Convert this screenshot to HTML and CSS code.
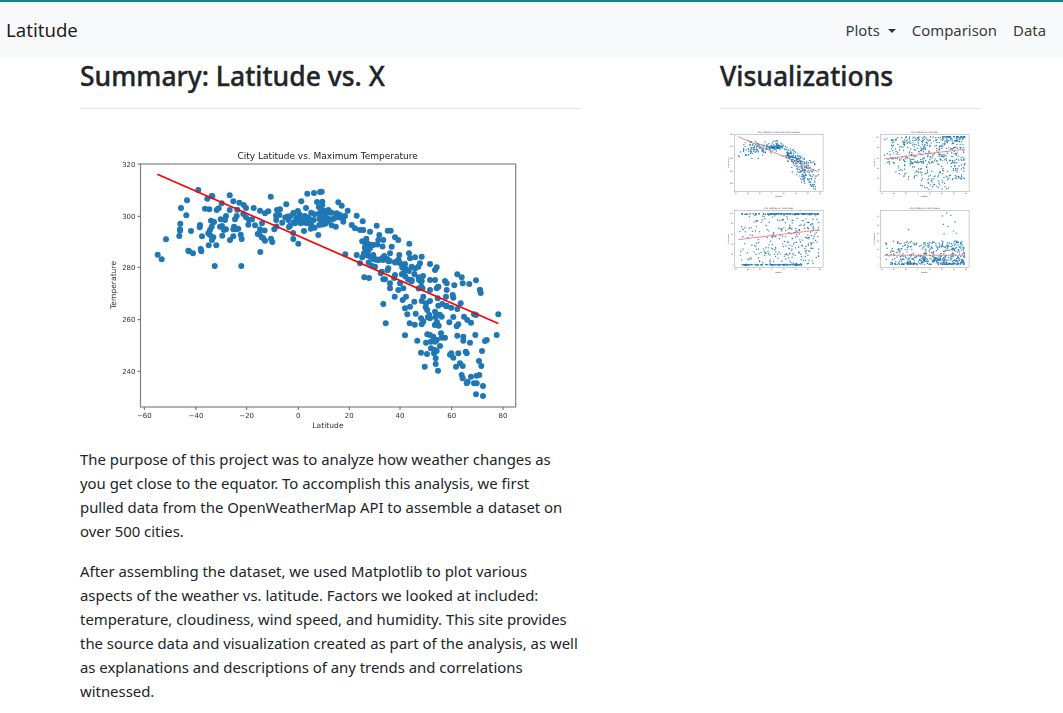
FILE: index.html
```html
<!DOCTYPE html>
<html lang="en">
<head>
<meta charset="utf-8">
<title>Latitude</title>
<link rel="stylesheet" href="styles.css">
</head>
<body>
<nav class="navbar">
  <a class="brand" href="#">Latitude</a>
  <ul class="nav-links">
    <li><a href="#">Plots<span class="caret"></span></a></li>
    <li><a href="#">Comparison</a></li>
    <li><a href="#">Data</a></li>
  </ul>
</nav>
<main class="layout">
  <section class="summary">
    <h1>Summary: Latitude vs. X</h1>
    <hr>
    <svg class="main-chart" id="chart-main" viewBox="80 125 500 307"></svg>
    <p class="intro">The purpose of this project was to analyze how weather changes as you get close to the equator. To accomplish this analysis, we first pulled data from the OpenWeatherMap API to assemble a dataset on over 500 cities.</p>
    <p>After assembling the dataset, we used Matplotlib to plot various aspects of the weather vs. latitude. Factors we looked at included: temperature, cloudiness, wind speed, and humidity. This site provides the source data and visualization created as part of the analysis, as well as explanations and descriptions of any trends and correlations witnessed.</p>
  </section>
  <aside class="visuals">
    <h1>Visualizations</h1>
    <hr>
    <div class="thumbs">
      <svg class="thumb" id="thumb-temp" viewBox="80 125 500 307"></svg>
      <svg class="thumb" id="thumb-hum" viewBox="80 125 500 307"></svg>
      <svg class="thumb" id="thumb-cloud" viewBox="80 125 500 307"></svg>
      <svg class="thumb" id="thumb-wind" viewBox="80 125 500 307"></svg>
    </div>
  </aside>
</main>
<script src="script.js"></script>
</body>
</html>
```
FILE: styles.css
```css
* { box-sizing: border-box; }
html, body { margin: 0; padding: 0; }
body {
  font-family: "Noto Sans", "Open Sans", sans-serif;
  font-size: 14.9px;
  line-height: 24px;
  color: #212529;
  background: #fff;
  overflow-x: hidden;
}
a { color: inherit; text-decoration: none; }
.navbar {
  display: flex;
  align-items: center;
  justify-content: space-between;
  height: 58px;
  padding: 0 17px 0 6px;
  background: #f8f9fa;
  border-top: 2px solid #17808f;
}
.brand { font-size: 18.6px; color: rgba(0, 0, 0, .9); }
.nav-links {
  display: flex;
  gap: 16px;
  margin: 0;
  padding: 0;
  list-style: none;
  color: rgba(0, 0, 0, .8);
}
.caret {
  display: inline-block;
  margin-left: 8px;
  vertical-align: 3px;
  border-top: 4.5px solid currentColor;
  border-left: 4.5px solid transparent;
  border-right: 4.5px solid transparent;
}
.layout {
  display: grid;
  grid-template-columns: 500px 260px;
  column-gap: 140px;
  padding: 0 80px;
}
h1 {
  margin: 0;
  font-size: 26.5px;
  font-weight: 500;
  -webkit-text-stroke: .35px #212529;
  line-height: 36px;
  color: #212529;
}
hr {
  margin: 14px 0 16px;
  border: 0;
  border-top: 1px solid #e3e4e5;
}
.main-chart {
  display: block;
  width: 500px;
  height: 307px;
  margin-bottom: 15px;
  filter: blur(.3px);
}
p { margin: 0 0 16px; }
.intro { max-width: 490px; }
.thumbs {
  display: grid;
  grid-template-columns: 146px 114px;
  row-gap: 3px;
}
.thumb {
  display: block;
  width: 118.3px;
  height: 72.7px;
  overflow: visible;
  filter: blur(.5px);
}
.axis-box { fill: #fff; stroke: #808080; stroke-width: 1.2; }
.tick { stroke: #666; stroke-width: 1; }
.fit { stroke: #f00; stroke-width: 1.7; fill: none; }
.dot { fill: #1f77b4; }
.tick-label, .axis-label, .chart-title {
  font-family: "DejaVu Sans", sans-serif;
  fill: #333;
}
.tick-label { font-size: 7px; }
.axis-label { font-size: 7.6px; }
.chart-title { font-size: 9px; fill: #222; }
.thumb .tick-label, .thumb .axis-label { fill: #444; }
.thumb .chart-title { fill: #444; }
.thumb .axis-box { stroke: #999; stroke-width: 2; }
.thumb .fit { stroke-width: 3.2; stroke: #ff5c5c; }
.thumb .dot { opacity: .9; }
```
FILE: script.js
```js
// Scatter charts drawn as SVG. All coordinates are in the main chart's page pixels.
var NS = 'http://www.w3.org/2000/svg';
var L = 140.5, R = 515.7, T = 164, B = 407;

function mapGroup(ox, oy, s) {
  return s.trim().split(/\s+/).map(function (p) {
    var c = p.split(',');
    return [ox + c[0] / 3, oy + c[1] / 3];
  });
}

var temp = [].concat(
  mapGroup(100, 140, '173,344 185,358 198,298 238,288 240,272 240,268 241,251 243,204 259,226 261,181 295,150 322,176 335,168 337,169 265,332 267,334 279,340 302,327 304,334 273,273 300,255 299,262 306,289 326,316 344,378 349,316 424,378 481,336 340,292 336,300 330,285 325,280 330,270 335,260 333,242 342,246 315,206 328,208 350,210 356,205 365,190 389,166 400,184 389,210 418,188 431,195 438,204 412,209 410,228 405,238 378,228 375,240 362,238 360,260 366,258 367,287 378,268 372,270 402,260 400,268 408,268 415,266 400,289 390,300 422,284 425,297 461,204 480,212 495,220 512,170 430,222 438,232 447,240 456,238 465,256 445,254 486,250 480,268 478,282 473,282 485,292 490,295 495,302 513,296 517,306 523,268 531,210 540,208 559,193 604,184 618,204 622,161 642,159 660,156 651,186 580,297 595,311 655,285'),
  mapGroup(320, 140, '5,155 7,185 7,195 5,210 25,210 10,225 20,235 35,218 50,220 55,187 65,197 60,225 75,228 83,212 110,227 128,244 70,245 95,255 105,265 120,270 130,270 150,275 170,257 203,272 212,272 178,285 225,292 235,300 268,311 140,310 160,315 150,325 135,325 160,345 150,350 140,330 175,300 190,300 215,320 210,340 238,345 267,340 285,352 305,350 270,355 330,372 350,382 345,390 76,343 110,345 120,370 155,377 133,412 147,414 175,360 190,360 205,385 240,370 255,385 275,380 295,380 300,370 190,418 195,418 210,430 240,430 330,420 345,420 375,423 355,440 412,403 425,412 468,421 428,430 448,432 403,436 480,450 380,430 165,380 185,395 225,405 250,400 275,420 210,445 250,445'),
  mapGroup(320, 285, '190,57 197,115 255,151 292,167 224,35 235,15 248,45 258,35 255,70 270,65 262,88 269,115 287,86 303,100 305,118 283,50 305,48 310,35 317,67 330,48 328,90 330,100 345,80 355,62 365,95 353,40 378,35 398,30 400,38 422,55 412,72 400,96 388,112 415,118 410,124 432,95 442,105 453,113 462,88 468,90 480,15 482,24 535,88 530,150 500,165 495,168 466,150 450,173 430,155 430,167 412,152 356,122 322,148 330,150 340,155 350,165 345,170 363,145 365,158 375,158 360,183 318,173 332,170 333,190 345,195 350,198 342,205 321,207 303,203 347,220 347,237 314,245 354,257 394,205 390,209 400,218 415,205 437,200 440,205 486,198 477,228 484,243 420,235 408,245 428,243 425,270 428,280 453,275 470,272 478,270 443,290 440,295 462,295 470,295 489,303 468,328 489,333 355,5 330,15 350,10 380,15')
);

var seed = 12345;
function rnd() {
  seed = (seed * 16807) % 2147483647;
  return seed / 2147483647;
}
function gauss() { return (rnd() + rnd() + rnd() - 1.5) / 1.5; }

// Dense band around the equator in the temperature chart
for (var i = 0; i < 70; i++) {
  temp.push([305 + gauss() * 55, 221 + gauss() * 15]);
}
// Dense band along the descending part of the curve
for (var j = 0; j < 55; j++) {
  var dx = rnd();
  temp.push([362 + dx * 62, 246 + dx * 34 + gauss() * 20]);
}
for (var m = 0; m < 14; m++) {
  temp.push([410 + rnd() * 70, 303 + rnd() * 24]);
}

function gen(n, fn) {
  var a = [];
  for (var i = 0; i < n; i++) a.push(fn());
  return a;
}
function lat() {
  // more cities in the north
  var u = rnd();
  return 158 + 340 * Math.pow(u, 0.72);
}
var hum = gen(530, function () {
  var x = lat(), f = (x - 158) / 340, y;
  if (rnd() < 0.65) {
    y = T + 10 + Math.pow(rnd(), f > 0.7 ? 2.4 : 1.2) * 115;
  } else if (f > 0.42 && f < 0.82) {
    y = T + 90 + rnd() * 145;
  } else if (f > 0.12) {
    y = T + 100 + rnd() * 90;
  } else {
    y = T + 70 + rnd() * 60;
  }
  return [x, y];
});
var cloud = gen(520, function () {
  var x = lat(), u = rnd(), y;
  if (u < 0.27) y = T + 14 + rnd() * 3;
  else if (u < 0.47) y = B - 14 + rnd() * 3;
  else y = T + 14 + rnd() * 215;
  if (u >= 0.27 && u < 0.47) x = 170 + rnd() * 260;
  return [x, y];
});
var wind = gen(500, function () {
  var x = lat(), y = B - 14 - Math.pow(rnd(), 1.7) * 100;
  return [x, y];
}).concat(mapGroup(860, 200, '245,47 258,38 270,45 248,72 262,78 283,65 278,92 145,87 287,98 250,100').map(function (p) {
  // positions read from the thumbnail, expanded to main-chart coordinates
  return [140.5 + (p[0] - 880.5) / 87.5 * 375, 164 + (p[1] - 210) / 57 * 243];
}));

function el(parent, name, attrs, text) {
  var n = document.createElementNS(NS, name);
  for (var k in attrs) n.setAttribute(k, attrs[k]);
  if (text !== undefined) n.textContent = text;
  parent.appendChild(n);
  return n;
}

var X_TICKS = [[144.3, '\u221260'], [196, '\u221240'], [246.7, '\u221220'], [298.3, '0'], [349.3, '20'], [400, '40'], [451.7, '60'], [503, '80']];

function chart(id, o) {
  var s = document.getElementById(id);
  el(s, 'rect', { 'class': 'axis-box', x: L, y: T, width: R - L, height: B - T });
  o.points.forEach(function (p) {
    el(s, 'circle', { 'class': 'dot', cx: p[0].toFixed(1), cy: p[1].toFixed(1), r: o.r });
  });
  el(s, 'line', { 'class': 'fit', x1: o.line[0], y1: o.line[1], x2: o.line[2], y2: o.line[3] });
  X_TICKS.forEach(function (t) {
    el(s, 'line', { 'class': 'tick', x1: t[0], x2: t[0], y1: B, y2: B + 3 });
    el(s, 'text', { 'class': 'tick-label', x: t[0], y: B + 11, 'text-anchor': 'middle' }, t[1]);
  });
  o.yTicks.forEach(function (t) {
    el(s, 'line', { 'class': 'tick', x1: L - 3, x2: L, y1: t[0], y2: t[0] });
    el(s, 'text', { 'class': 'tick-label', x: L - 5, y: t[0] + 2.6, 'text-anchor': 'end' }, t[1]);
  });
  el(s, 'text', { 'class': 'chart-title', x: (L + R) / 2 - .5, y: T - 5, 'text-anchor': 'middle' }, o.title);
  el(s, 'text', { 'class': 'axis-label', x: 328, y: 428, 'text-anchor': 'middle' }, 'Latitude');
  el(s, 'text', { 'class': 'axis-label', transform: 'translate(116 285) rotate(-90)', 'text-anchor': 'middle' }, o.ylabel);
}

var tempTicks = [[164, '320'], [216.3, '300'], [267.3, '280'], [319.7, '260'], [371.3, '240']];
function pctTicks() {
  var r = [];
  for (var v = 0; v <= 100; v += 20) r.push([B - 11 - v * 2.2, String(v)]);
  return r;
}

chart('chart-main', { points: temp, r: 3, line: [157.3, 174.3, 498.3, 323.5], yTicks: tempTicks, title: 'City Latitude vs. Maximum Temperature', ylabel: 'Temperature' });
chart('thumb-temp', { points: temp, r: 3, line: [157.3, 174.3, 498.3, 323.5], yTicks: tempTicks, title: 'City Latitude vs. Maximum Temperature', ylabel: 'Temperature' });
chart('thumb-hum', { points: hum, r: 3, line: [158, 268, 498, 227], yTicks: pctTicks(), title: 'City Latitude vs. Humidity', ylabel: 'Humidity' });
chart('thumb-cloud', { points: cloud, r: 3, line: [158, 288, 498, 247], yTicks: pctTicks(), title: 'City Latitude vs. Cloudiness', ylabel: 'Cloudiness' });
chart('thumb-wind', { points: wind, r: 3, line: [158, 354, 498, 354], yTicks: [[396, '0'], [362, '5'], [328, '10'], [294, '15'], [260, '20'], [226, '25'], [192, '30']], title: 'City Latitude vs. Wind Speed', ylabel: 'Wind Speed' });
```
